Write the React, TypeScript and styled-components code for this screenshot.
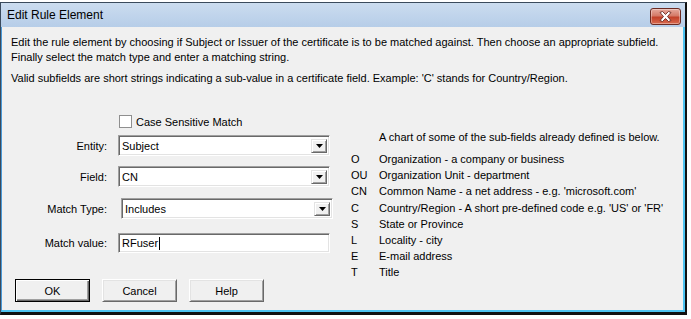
import styled, { createGlobalStyle } from "styled-components";

const GlobalStyle = createGlobalStyle`
	html, body {
		margin: 0;
		padding: 0;
		background: #ffffff;
	}
	body {
		width: 691px;
		height: 319px;
		overflow: hidden;
		font-family: "Liberation Sans", Arial, sans-serif;
		font-size: 11px;
		color: #000;
	}
`;

const Window = styled.div`
	margin-top: 2px;
	width: 687px;
	height: 313px;
	display: flex;
	flex-direction: column;
	border: 1px solid #3a4a5c;
	border-right: 2px solid #111;
	border-bottom: 3px solid #111;
	background: #b9d1ea;
	box-sizing: border-box;
`;

const TitleBar = styled.div`
	height: 24px;
	display: flex;
	align-items: center;
	justify-content: space-between;
	padding: 0 4px 0 6px;
	background: linear-gradient(#cbdcef, #b6cde8);
	flex-shrink: 0;
`;

const Title = styled.span`
	font-family: "Liberation Sans", Arial, sans-serif;
	font-size: 12px;
	color: #000;
`;

const CloseButton = styled.button`
	width: 31px;
	height: 17px;
	margin-top: 3px;
	padding: 0;
	display: flex;
	align-items: center;
	justify-content: center;
	border: 1px solid #6b2a22;
	border-radius: 3px;
	background: linear-gradient(#e6a99d 0%, #d47a68 45%, #c2412a 55%, #d96a4f 100%);
	box-shadow: inset 0 0 0 1px rgba(255, 255, 255, 0.35);
	cursor: pointer;
`;

const Client = styled.div`
	flex: 1;
	background: #f0f0f0;
	padding: 8px 0 0 9px;
	border-right: 2px solid #4ec3f0;
	border-bottom: 2px solid #4ec3f0;
	border-left: 1px solid #4a9ad8;
	display: flex;
	flex-direction: column;
`;

const Intro = styled.p`
	margin: 0;
	line-height: 15px;
	& + & {
		margin-top: 6px;
	}
`;

const Main = styled.div`
	display: grid;
	grid-template-columns: 340px 1fr;
	align-items: start;
	margin-top: 29px;
`;

const Form = styled.div`
	display: flex;
	flex-direction: column;
`;

const Row = styled.div<{ $gap: number }>`
	display: grid;
	grid-template-columns: 96px 1fr;
	column-gap: 11px;
	align-items: center;
	margin-top: ${(p) => p.$gap}px;
`;

const Label = styled.label`
	text-align: right;
`;

const CheckRow = styled.label`
	display: flex;
	align-items: center;
	gap: 4px;
	margin-left: 1px;
`;

const CheckBox = styled.span`
	width: 11px;
	height: 11px;
	border: 1px solid #8f8f8f;
	background: #fff;
	flex-shrink: 0;
`;

const Sunken = styled.div<{ $shift?: number; $h: number }>`
	width: 212px;
	height: ${(p) => p.$h}px;
	margin-left: ${(p) => p.$shift || 0}px;
	box-sizing: border-box;
	background: #fff;
	border-top: 1px solid #a0a0a0;
	border-left: 1px solid #a0a0a0;
	border-right: 1px solid #fff;
	border-bottom: 1px solid #fff;
	box-shadow: inset 1px 1px 0 #696969, inset -1px -1px 0 #e3e3e3;
	display: flex;
	align-items: center;
	justify-content: space-between;
	padding: 0 2px 0 3px;
`;

const Value = styled.span`
	display: flex;
	align-items: center;
`;

const Caret = styled.span`
	width: 1px;
	height: 13px;
	background: #000;
	margin-left: 1px;
`;

const DropButton = styled.span`
	width: 16px;
	height: 14px;
	box-sizing: border-box;
	background: #f0f0f0;
	border-top: 1px solid #e3e3e3;
	border-left: 1px solid #e3e3e3;
	border-right: 1px solid #696969;
	border-bottom: 1px solid #696969;
	box-shadow: inset 1px 1px 0 #fff, inset -1px -1px 0 #a0a0a0;
	display: flex;
	align-items: center;
	justify-content: center;
`;

const Chart = styled.div`
	margin-top: 14px;
	display: flex;
	flex-direction: column;
`;

const ChartHeader = styled.div`
	padding-left: 28px;
	line-height: 16px;
	margin-bottom: 6px;
`;

const ChartRow = styled.div`
	display: grid;
	grid-template-columns: 28px 1fr;
	line-height: 16.2px;
`;

const Buttons = styled.div`
	display: flex;
	gap: 12px;
	margin-top: 26px;
	margin-left: 4px;
`;

const Button = styled.button<{ $default?: boolean }>`
	width: 75px;
	height: 23px;
	padding: 0;
	font-family: "Liberation Sans", Arial, sans-serif;
	font-size: 11px;
	color: #000;
	background: #f0f0f0;
	border: 1px solid;
	border-color: ${(p) => (p.$default ? "#000" : "#fff #696969 #696969 #fff")};
	box-shadow: ${(p) =>
		p.$default
			? "inset 1px 1px 0 #fff, inset -1px -1px 0 #696969, inset -2px -2px 0 #a0a0a0"
			: "inset 1px 1px 0 #e3e3e3, inset -1px -1px 0 #a0a0a0"};
	cursor: pointer;
`;

const subfields: [string, string][] = [
	["O", "Organization - a company or business"],
	["OU", "Organization Unit - department"],
	["CN", "Common Name - a net address - e.g. 'microsoft.com'"],
	["C", "Country/Region - A short pre-defined code e.g. 'US' or 'FR'"],
	["S", "State or Province"],
	["L", "Locality - city"],
	["E", "E-mail address"],
	["T", "Title"],
];

function Arrow() {
	return (
		<svg width="7" height="4" viewBox="0 0 7 4">
			<path d="M0 0H7L3.5 4Z" fill="#000" />
		</svg>
	);
}

function Combo({ value, shift, gap, label }: { value: string; shift?: number; gap: number; label: string }) {
	return (
		<Row $gap={gap}>
			<Label>{label}</Label>
			<Sunken $h={21} $shift={shift}>
				<Value>{value}</Value>
				<DropButton>
					<Arrow />
				</DropButton>
			</Sunken>
		</Row>
	);
}

export default function App() {
	return (
		<>
			<GlobalStyle />
			<Window>
				<TitleBar>
					<Title>Edit Rule Element</Title>
					<CloseButton aria-label="Close">
						<svg width="13" height="11" viewBox="0 0 13 11">
							<path
								d="M1 1.5L3.5 0.5L6.5 3.5L9.5 0.5L12 1.5L8.5 5.5L12 9.5L9.5 10.5L6.5 7.5L3.5 10.5L1 9.5L4.5 5.5Z"
								fill="#fff"
								stroke="#5a1c14"
								strokeWidth="0.8"
								strokeLinejoin="round"
							/>
						</svg>
					</CloseButton>
				</TitleBar>
				<Client>
					<Intro>
						Edit the rule element by choosing if Subject or Issuer of the certificate is to be matched against. Then choose an appropriate subfield.
						<br />
						Finally select the match type and enter a matching string.
					</Intro>
					<Intro>
						Valid subfields are short strings indicating a sub-value in a certificate field. Example: 'C' stands for Country/Region.
					</Intro>
					<Main>
						<Form>
							<Row $gap={0}>
								<span />
								<CheckRow>
									<CheckBox />
									Case Sensitive Match
								</CheckRow>
							</Row>
							<Combo label="Entity:" value="Subject" gap={7} />
							<Combo label="Field:" value="CN" gap={10} />
							<Combo label="Match Type:" value="Includes" gap={11} shift={3} />
							<Row $gap={14}>
								<Label>Match value:</Label>
								<Sunken $h={20}>
									<Value>
										RFuser
										<Caret />
									</Value>
								</Sunken>
							</Row>
							<Buttons>
								<Button $default>OK</Button>
								<Button>Cancel</Button>
								<Button>Help</Button>
							</Buttons>
						</Form>
						<Chart>
							<ChartHeader>A chart of some of the sub-fields already defined is below.</ChartHeader>
							{subfields.map(([code, desc]) => (
								<ChartRow key={code}>
									<span>{code}</span>
									<span>{desc}</span>
								</ChartRow>
							))}
						</Chart>
					</Main>
				</Client>
			</Window>
		</>
	);
}
